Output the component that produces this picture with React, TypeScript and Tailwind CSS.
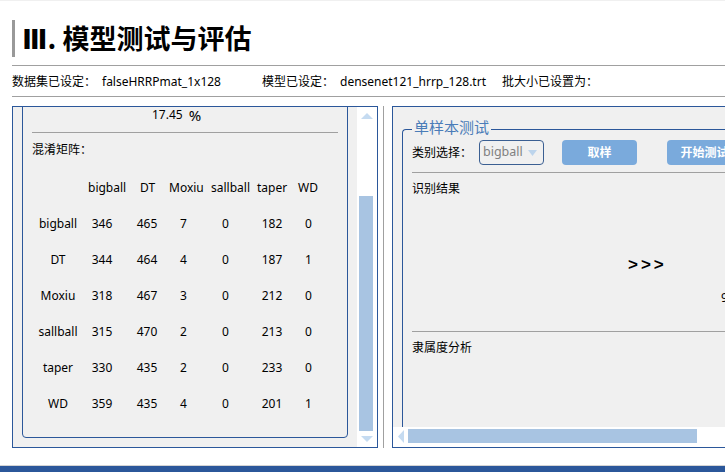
import React from "react";

const headers = [
  { name: "bigball", w: "w-[52px]" },
  { name: "DT", w: "w-[29px]" },
  { name: "Moxiu", w: "w-[42px]" },
  { name: "sallball", w: "w-[46px]" },
  { name: "taper", w: "w-[41px]" },
  { name: "WD", w: "w-[30px]" },
];

const rows: [string, number[]][] = [
  ["bigball", [346, 465, 7, 0, 182, 0]],
  ["DT", [344, 464, 4, 0, 187, 1]],
  ["Moxiu", [318, 467, 3, 0, 212, 0]],
  ["sallball", [315, 470, 2, 0, 213, 0]],
  ["taper", [330, 435, 2, 0, 233, 0]],
  ["WD", [359, 435, 4, 0, 201, 1]],
];

function ConfusionMatrix() {
  return (
    <div className="shrink-0 border border-[#2b579a] rounded-[4px] px-[9px] pt-[30px] pb-[15px]">
      <div className="h-[20px] flex items-center">
        <span className="ml-[120px]">17.45</span>
        <span className="ml-[6px] text-[15px] leading-[18px]">%</span>
      </div>
      <div className="mt-[7px] h-px bg-[#a0a0a0]" />
      <div className="mt-[7px] h-[20px] leading-[20px]">混淆矩阵：</div>
      <div className="mt-[10px] h-[36px] flex items-center pl-[56px] whitespace-nowrap">
        {headers.map((h) => (
          <span key={h.name} className={`${h.w} shrink-0`}>
            {h.name}
          </span>
        ))}
      </div>
      {rows.map(([label, vals]) => (
        <div
          key={label}
          className="h-[36px] grid grid-cols-[52px_36px_54px_19px_65px_28px_45px] items-center whitespace-nowrap"
        >
          <div className="flex justify-center">{label}</div>
          {vals.map((v, i) => (
            <div key={i} className="flex justify-center">
              {v}
            </div>
          ))}
        </div>
      ))}
    </div>
  );
}

function LeftPanel() {
  return (
    <div className="w-[366px] h-[342px] shrink-0 border border-[#2b579a] flex">
      <div className="w-[344px] flex flex-col justify-end overflow-hidden bg-[#f0f0f0] px-[9px] pb-[9px]">
        <ConfusionMatrix />
      </div>
      <div className="w-[20px] bg-white flex flex-col">
        <div className="h-[17px] flex items-center justify-center">
          <svg width="12" height="6" viewBox="0 0 12 6">
            <polygon points="6,0 12,6 0,6" fill="#c5dbf1" />
          </svg>
        </div>
        <div className="flex-1 flex flex-col">
          <div className="mt-[72px] ml-[2px] w-[14px] flex-1 bg-[#a8c4e2]" />
        </div>
        <div className="h-[16px] flex items-center justify-center">
          <svg width="12" height="6" viewBox="0 0 12 6">
            <polygon points="0,0 12,0 6,6" fill="#c5dbf1" />
          </svg>
        </div>
      </div>
    </div>
  );
}

function RightPanel() {
  return (
    <div className="ml-[8px] w-[420px] h-[342px] shrink-0 border-l border-t border-b border-[#2b579a] flex flex-col">
      <div className="flex-1 min-h-0 overflow-hidden bg-[#f0f0f0] pl-[9px] pt-[22px]">
        <div className="relative h-[400px] border-l border-t border-[#2b579a] rounded-tl-[4px] pl-[9px] pt-[10px]">
          <span className="absolute left-[9px] top-[-13px] px-[2px] bg-[#f0f0f0] text-[15px] leading-[20px] text-[#4a7cb8]">
            单样本测试
          </span>
          <div className="h-[25px] flex items-center whitespace-nowrap">
            <span className="w-[67px] shrink-0">类别选择：</span>
            <div className="w-[65px] h-[25px] shrink-0 border border-[#3b5f92] rounded-[4px] flex items-center justify-between pl-[3px] pr-[6px]">
              <span className="text-[#808080] text-[12.5px]">bigball</span>
              <svg width="9" height="6" viewBox="0 0 9 6">
                <polygon points="0,0 9,0 4.5,6" fill="#bcd4ec" />
              </svg>
            </div>
            <button className="ml-[18px] w-[75px] h-[25px] shrink-0 rounded-[4px] bg-[#7aaadc] text-white font-bold">
              取样
            </button>
            <button className="ml-[30px] w-[75px] h-[25px] shrink-0 rounded-[4px] bg-[#7aaadc] text-white font-bold">
              开始测试
            </button>
          </div>
          <div className="mt-[7px] h-px bg-[#a0a0a0]" />
          <div className="mt-[6px] leading-[20px]">识别结果</div>
          <div className="mt-[56px] ml-[216px] leading-[20px] text-[17px] font-bold tracking-[3px] font-['Liberation_Sans',sans-serif]">
            &gt;&gt;&gt;
          </div>
          <div className="mt-[13px] ml-[309px] leading-[20px] whitespace-nowrap">99.9%</div>
          <div className="mt-[23px] h-px bg-[#a0a0a0]" />
          <div className="mt-[6px] leading-[20px]">隶属度分析</div>
        </div>
      </div>
      <div className="h-[20px] shrink-0 bg-white flex items-start pt-[2px]">
        <div className="w-[15px] h-[14px] flex items-center justify-center">
          <svg width="6" height="13" viewBox="0 0 6 13">
            <polygon points="6,0 6,13 0,6.5" fill="#c5dbf1" />
          </svg>
        </div>
        <div className="w-[289px] h-[14px] bg-[#a8c4e2]" />
      </div>
    </div>
  );
}

export default function App() {
  return (
    <div className="w-[725px] h-[472px] overflow-hidden bg-white flex flex-col text-[12px] text-black font-['Noto_Sans','Noto_Sans_CJK_SC',sans-serif]">
      <div className="h-px shrink-0 bg-[#f0f0f0]" />
      <div className="ml-3 mt-[19px] h-[37px] shrink-0 flex items-center border-l-[3px] border-[#999999] pl-[7px]">
        <h1 className="text-[27px] font-bold leading-none whitespace-nowrap font-['Noto_Sans_CJK_SC',sans-serif]">
          <span className="font-['DejaVu_Sans',sans-serif]">Ⅲ</span>. 模型测试与评估
        </h1>
      </div>
      <div className="ml-3 mt-[8px] h-px shrink-0 bg-[#a0a0a0]" />
      <div className="ml-3 h-[30px] shrink-0 flex items-center pt-[2px] whitespace-nowrap">
        <span className="w-[90px] shrink-0">数据集已设定：</span>
        <span className="w-[160px] shrink-0">falseHRRPmat_1x128</span>
        <span className="w-[78px] shrink-0">模型已设定：</span>
        <span className="w-[162px] shrink-0">densenet121_hrrp_128.trt</span>
        <span className="shrink-0">批大小已设置为：</span>
      </div>
      <div className="ml-3 h-px shrink-0 bg-[#a0a0a0]" />
      <div className="ml-3 mt-[9px] h-[342px] shrink-0 flex">
        <LeftPanel />
        <div className="ml-[5px] w-px shrink-0 bg-[#a0a0a0]" />
        <RightPanel />
      </div>
      <div className="flex-1" />
      <div className="h-px shrink-0 bg-[#d4d4d4]" />
      <div className="h-[6px] shrink-0 bg-[#2b579a]" />
    </div>
  );
}
